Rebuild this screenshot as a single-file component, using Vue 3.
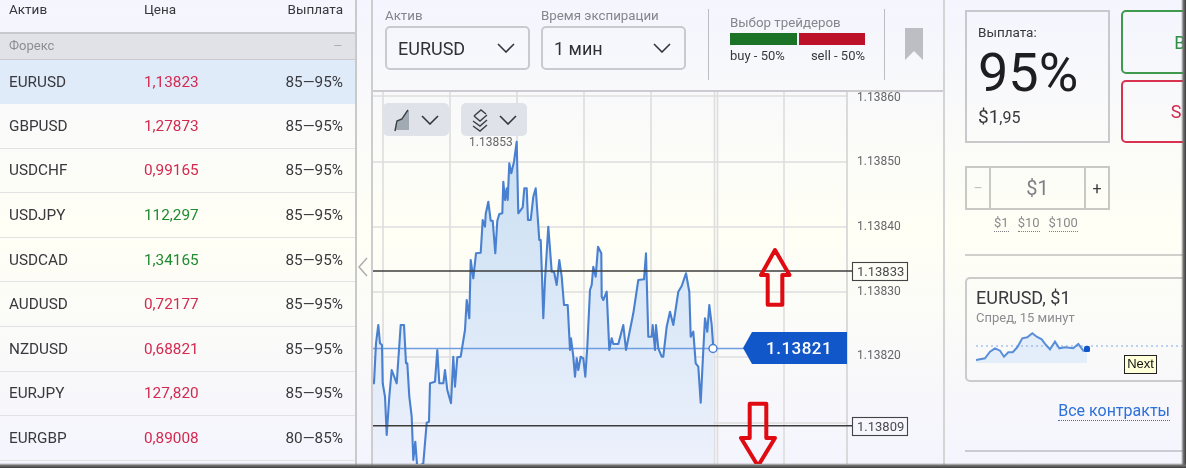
<template>
  <div class="frame">
    <aside class="assets">
      <div class="assets-head">
        <span>Актив</span>
        <span>Цена</span>
        <span class="pay">Выплата</span>
      </div>
      <div class="group">
        <span>Форекс</span>
        <span class="group-dash">—</span>
      </div>
      <div
        v-for="(row, i) in rows"
        :key="row.name"
        class="asset"
        :class="{ active: i === 0 }"
      >
        <span>{{ row.name }}</span>
        <span :class="row.up ? 'up' : 'down'">{{ row.price }}</span>
        <span class="pay">{{ row.pay }}</span>
      </div>
    </aside>

    <div class="collapse">
      <svg width="12" height="20" viewBox="0 0 12 20">
        <path d="M10 1 2 10l8 9" fill="none" stroke="#aeaeae" stroke-width="1.5" />
      </svg>
    </div>

    <main class="work">
      <div class="toolbar">
        <div class="field">
          <label>Актив</label>
          <div class="select">
            <span>EURUSD</span>
            <svg class="chev" width="18" height="10" viewBox="0 0 18 10"><path d="M1 1l8 8 8-8" /></svg>
          </div>
        </div>
        <div class="field">
          <label>Время экспирации</label>
          <div class="select">
            <span>1 мин</span>
            <svg class="chev" width="18" height="10" viewBox="0 0 18 10"><path d="M1 1l8 8 8-8" /></svg>
          </div>
        </div>
        <div class="traders">
          <div class="traders-title">Выбор трейдеров</div>
          <div class="bars"><i class="bar-buy"></i><i class="bar-sell"></i></div>
          <div class="bars-text"><span>buy - 50%</span><span>sell - 50%</span></div>
        </div>
        <div class="mark">
          <svg width="18" height="32" viewBox="0 0 18 32"><path d="M0 0h18v32l-9-9-9 9z" fill="#bdbdc4" /></svg>
        </div>
      </div>

      <div class="chart">
        <svg class="plot" width="570" height="372" viewBox="373 92 570 372">
          <defs>
            <linearGradient id="areaFill" x1="0" y1="0" x2="0" y2="1">
              <stop offset="0" stop-color="#c9dff2" />
              <stop offset="1" stop-color="#edf1fc" />
            </linearGradient>
          </defs>
          <line v-for="x in gridX" :key="'x' + x" :x1="x" :x2="x" y1="92" y2="464" class="grid" />
          <line v-for="y in gridY" :key="'y' + y" x1="371" x2="847" :y1="y" :y2="y" class="grid" />
          <line x1="847" x2="847" y1="92" y2="464" class="axis" />

          <path :d="areaPath" fill="url(#areaFill)" />
          <line x1="371" x2="745" y1="348.5" y2="348.5" stroke="#6f9fe0" stroke-width="1.3" />
          <path :d="linePath" fill="none" stroke="#4a80d0" stroke-width="2.1" stroke-linejoin="round" />
          <circle cx="713" cy="348.5" r="4" fill="#fff" stroke="#4a80d0" stroke-width="1.5" />

          <text v-for="t in ticks" :key="t.label" x="857" :y="t.y" class="tick">{{ t.label }}</text>
          <text x="469" y="146" class="tick">1.13853</text>

          <line x1="371" x2="852" y1="271" y2="271" class="level" />
          <line x1="371" x2="852" y1="425.7" y2="425.7" class="level" />
          <rect x="852.5" y="262.5" width="55" height="18" class="level-box" />
          <rect x="852.5" y="417.5" width="55" height="18" class="level-box" />
          <text x="857" y="276" class="level-text">1.13833</text>
          <text x="857" y="431" class="level-text">1.13809</text>

          <polygon points="743,348 752,332 847,332 847,364 752,364" fill="#1257c9" />
          <text x="766" y="354" class="tag-text">1.13821</text>

          <polygon class="arrow" points="775,250 761,275 767.7,275 767.7,304.7 782.3,304.7 782.3,275 789.5,275" />
          <polygon class="arrow" points="749.7,403.7 766.3,403.7 766.3,438 775,438 758,466 741,438 749.7,438" />
        </svg>

        <div class="tools">
          <div class="tool">
            <svg width="18" height="24" viewBox="0 0 18 24">
              <path d="M3 22l2-9 5-2 6-9v20z" fill="#a1a9b3" />
              <path d="M2 23l2-10 5-2 6-9" fill="none" stroke="#3b3f46" stroke-width="1.5" />
            </svg>
            <svg class="chev" width="18" height="10" viewBox="0 0 18 10"><path d="M1 1l8 8 8-8" /></svg>
          </div>
          <div class="tool">
            <svg width="18" height="24" viewBox="0 0 18 24">
              <g fill="none" stroke="#3b3f46" stroke-width="1.4">
                <path d="M3 8l7-6 5 4" />
                <path d="M3 8l6 5 7-6" />
                <path d="M2 13l7 5 7-6" />
                <path d="M2 18l7 5 7-6" />
              </g>
            </svg>
            <svg class="chev" width="18" height="10" viewBox="0 0 18 10"><path d="M1 1l8 8 8-8" /></svg>
          </div>
        </div>
      </div>
    </main>

    <section class="side">
      <div class="top-row">
        <div class="payout">
          <div class="payout-label">Выплата:</div>
          <div class="payout-value">95%</div>
          <div class="payout-sum">$1<small>,95</small></div>
        </div>
        <div class="actions">
          <button class="btn btn-buy">BUY</button>
          <button class="btn btn-sell">SELL</button>
        </div>
      </div>

      <div class="stepper">
        <div class="step step-off">–</div>
        <div class="amount">$1</div>
        <div class="step">+</div>
      </div>
      <div class="presets">
        <span>$1</span>
        <span>$10</span>
        <span>$100</span>
      </div>

      <hr class="rule rule-a" />

      <div class="contract">
        <div class="contract-title">EURUSD, $1</div>
        <div class="contract-sub">Спред, 15 минут</div>
        <svg class="spark" width="208" height="34" viewBox="976 342 208 34">
          <path :d="sparkArea" fill="#e4eefa" />
          <line x1="976" x2="1184" y1="356" y2="356" stroke="#7fa9e6" stroke-width="1.2" stroke-dasharray="2 3" />
          <path :d="sparkLine" fill="none" stroke="#5a8ed8" stroke-width="2" />
          <rect x="1084" y="356" width="6" height="6" rx="1.5" fill="#1257c9" />
        </svg>
        <div class="hint">Next</div>
      </div>

      <div class="all-row"><a class="all">Все контракты</a></div>

      <hr class="rule rule-b" />
    </section>

    <div class="edge-right"></div>
    <div class="edge-bottom"></div>
  </div>
</template>

<script setup>
const rows = [
  { name: 'EURUSD', price: '1,13823', up: false, pay: '85—95%' },
  { name: 'GBPUSD', price: '1,27873', up: false, pay: '85—95%' },
  { name: 'USDCHF', price: '0,99165', up: false, pay: '85—95%' },
  { name: 'USDJPY', price: '112,297', up: true, pay: '85—95%' },
  { name: 'USDCAD', price: '1,34165', up: true, pay: '85—95%' },
  { name: 'AUDUSD', price: '0,72177', up: false, pay: '85—95%' },
  { name: 'NZDUSD', price: '0,68821', up: false, pay: '85—95%' },
  { name: 'EURJPY', price: '127,820', up: false, pay: '85—95%' },
  { name: 'EURGBP', price: '0,89008', up: false, pay: '80—85%' }
]

const gridX = [383, 450, 517, 584, 651, 714.5, 717.5, 784]
const gridY = [96, 162, 227, 292, 357, 423]

const ticks = [
  { label: '1.13860', y: 101 },
  { label: '1.13850', y: 165 },
  { label: '1.13840', y: 230 },
  { label: '1.13830', y: 295 },
  { label: '1.13820', y: 359 }
]

// traced from the chart, first part is x/y at 3x from (370,130)
const partA = [
  [0,738],[12,760],[18,640],[25,585],[30,640],[36,645],[38,760],[45,800],[50,915],[58,800],[65,720],[80,760],
  [92,585],[102,585],[108,700],[112,700],[118,800],[125,860],[130,990],[136,935],[142,1014],[160,1000],[170,878],
  [177,875],[180,760],[195,755],[202,660],[208,760],[220,760],[225,720],[232,780],[243,820],[250,680],[255,770],
  [262,682],[272,680],[285,600],[290,510],[298,565],[302,390],[310,445],[318,370],[332,368],[338,270],[345,290],
  [347,252],[355,215],[362,272],[368,272],[376,370],[382,272],[388,252],[397,250],[400,155],[405,210],[410,175],
  [413,210],[418,100],[424,130],[432,95],[440,35],[445,250],[458,232],[463,175],[470,175],[474,270],[482,270],
  [490,200],[497,175],[508,330],[512,330],[516,440],[520,565],[525,450],[535,290],[545,425],[552,425],[560,465],
  [568,390],[575,440],[582,525],[593,525],[600,660],[603,625],[610,680],[615,740],[620,685],[625,720],[632,680],
  [640,685],[646,740],[652,650],[660,480],[665,465],[670,410],[677,440],[684,350],[694,370]
].map(([x, y]) => [370 + x / 3, 130 + y / 3])

// second part, 3x from (600,220)
const partB = [
  [5,230],[10,240],[20,215],[28,390],[35,355],[40,372],[55,372],[70,315],[78,390],[100,280],[115,180],[132,178],
  [138,100],[145,350],[155,350],[158,315],[165,390],[168,315],[175,385],[185,410],[190,410],[200,320],[210,275],
  [220,315],[235,215],[245,198],[258,160],[268,215],[272,350],[280,335],[287,430],[295,440],[302,548],[310,390],
  [315,295],[322,335],[328,255],[335,315],[340,385]
].map(([x, y]) => [600 + x / 3, 220 + y / 3])

const toPath = (pts) => pts.map(([x, y], i) => (i ? 'L' : 'M') + x.toFixed(1) + ' ' + y.toFixed(1)).join('')

const line = [...partA, ...partB]
const linePath = toPath(line)
const areaPath = linePath + 'L713 470L370 470Z'

const spark = [
  [108,390],[135,385],[150,365],[165,355],[180,362],[192,380],[205,367],[218,367],[232,352],[247,325],[262,322],
  [277,310],[290,320],[305,328],[318,345],[330,358],[345,335],[358,355],[375,352],[400,355],[415,342],[430,362],[441,362]
].map(([x, y]) => [940 + x / 3, 240 + y / 3])

const sparkLine = toPath(spark)
const sparkArea = sparkLine + 'L1087 373L976 373Z'
</script>

<style scoped>
.frame {
  position: relative;
  display: flex;
  width: 1186px;
  height: 468px;
  overflow: hidden;
  background: linear-gradient(#f4f5fe 0, #fbfbf9 30%, #fffff5 50%, #f4f4fe 100%);
  font-family: Roboto, "Liberation Sans", sans-serif;
  color: #38383d;
  filter: blur(0.4px);
}

/* left list */
.assets {
  flex: none;
  width: 357px;
  border-right: 2px solid #c9c9c9;
  box-sizing: border-box;
  font-size: 15.3px;
}
.assets-head {
  display: grid;
  grid-template-columns: 135px 1fr auto;
  height: 32px;
  padding: 1px 12px 0 9px;
  box-sizing: border-box;
  font-size: 13.5px;
  line-height: 17px;
}
.group {
  display: flex;
  justify-content: space-between;
  align-items: center;
  height: 28px;
  padding: 0 13px 2px 9px;
  box-sizing: border-box;
  background: #e1e1e8;
  border-top: 2px solid #c8c8cf;
  border-bottom: 1px solid #cacad0;
  color: #8d8d93;
  font-size: 13px;
}
.group-dash {
  font-size: 11px;
  color: #a5a5aa;
}
.asset {
  display: grid;
  grid-template-columns: 135px 1fr auto;
  align-items: center;
  height: 44.6px;
  padding: 0 12px 0 9px;
  box-sizing: border-box;
  border-bottom: 1px solid #e2e2e2;
}
.asset.active {
  height: 44px;
  background: #e0ebfa;
  border-bottom: 0;
}
.pay {
  text-align: right;
}
.down {
  color: #d3294e;
}
.up {
  color: #1e8b30;
}

.collapse {
  flex: none;
  width: 14px;
  padding-top: 257px;
  box-sizing: border-box;
}

/* centre */
.work {
  flex: none;
  display: flex;
  flex-direction: column;
  width: 570px;
  border-left: 2px solid #cdcdcd;
  border-right: 2px solid #d4d4d4;
  margin-right: -2px;
}
.toolbar {
  flex: none;
  display: flex;
  height: 92px;
  padding: 8px 0 0 12px;
  box-sizing: border-box;
  border-bottom: 2px solid #cbcbd1;
}
.field {
  width: 145px;
  margin-right: 11px;
}
.field label {
  display: block;
  height: 18px;
  font-size: 13.3px;
  line-height: 15px;
  color: #85858b;
}
.select {
  display: flex;
  justify-content: space-between;
  align-items: center;
  height: 44px;
  padding: 0 13px 0 11px;
  box-sizing: border-box;
  border: 2px solid #c9c9d0;
  border-radius: 5px;
  font-size: 18px;
  color: #303036;
}
.chev {
  fill: none;
  stroke: #33363c;
  stroke-width: 1.6;
}
.traders {
  width: 177px;
  height: 71px;
  margin: 1px 0 0 11px;
  padding: 6px 0 0 21px;
  box-sizing: border-box;
  border-left: 1px solid #bcbcc2;
  border-right: 1px solid #bcbcc2;
}
.traders-title {
  font-size: 13.3px;
  line-height: 16px;
  color: #85858b;
}
.bars {
  display: flex;
  gap: 2px;
  width: 135px;
  margin-top: 2px;
}
.bars i {
  flex: 1;
  height: 12px;
}
.bar-buy {
  background: #1a7326;
}
.bar-sell {
  background: #bd1029;
}
.bars-text {
  display: flex;
  justify-content: space-between;
  width: 135px;
  margin-top: 4px;
  font-size: 13px;
  line-height: 14px;
}
.mark {
  margin: 20px 0 0 20px;
}

.chart {
  position: relative;
  flex: 1;
}
.plot {
  position: absolute;
  left: 0;
  top: 0;
}
.grid {
  stroke: #dedede;
  stroke-width: 1.6;
}
.axis {
  stroke: #d3d3d3;
  stroke-width: 1.6;
}
.level {
  stroke: #3c3c3c;
  stroke-width: 1.4;
}
.level-box {
  fill: none;
  stroke: #444;
  stroke-width: 1.1;
}
.tick {
  font-size: 12px;
  fill: #66666a;
}
.level-text {
  font-size: 13px;
  fill: #4a4a4e;
}
.tag-text {
  font-size: 17px;
  font-weight: 500;
  letter-spacing: 0.5px;
  fill: #fff;
}
.arrow {
  fill: none;
  stroke: #e00b12;
  stroke-width: 4;
  stroke-linejoin: round;
}
.tools {
  position: absolute;
  left: 10px;
  top: 11px;
  display: flex;
  gap: 12px;
}
.tool {
  display: flex;
  align-items: center;
  justify-content: center;
  gap: 10px;
  width: 66px;
  height: 33px;
  background: #dfe2e8;
  border-radius: 5px;
}

/* right */
.side {
  flex: none;
  position: relative;
  width: 243px;
  padding: 10px 0 0 22px;
  box-sizing: border-box;
  overflow: hidden;
}
.top-row {
  display: flex;
  gap: 11px;
}
.payout {
  flex: none;
  width: 145px;
  height: 133px;
  padding: 12px 0 0 11px;
  box-sizing: border-box;
  border: 2px solid #c8c8cd;
}
.payout-label {
  font-size: 13.5px;
  line-height: 16px;
}
.payout-value {
  margin-top: 3px;
  font-size: 54px;
  line-height: 60px;
  font-weight: 400;
  color: #1d1d22;
}
.payout-sum {
  margin-top: 3px;
  font-size: 19px;
  line-height: 22px;
}
.payout-sum small {
  font-size: 16px;
}
.actions {
  flex: none;
  display: flex;
  flex-direction: column;
  gap: 6px;
}
.btn {
  width: 140px;
  height: 64px;
  background: transparent;
  border: 2px solid;
  border-radius: 5px;
  font-family: inherit;
  font-size: 18px;
  padding: 0;
}
.btn-buy {
  border-color: #3f9a4e;
  color: #2f8f42;
}
.btn-sell {
  height: 63px;
  border-color: #d9324f;
  color: #d3294e;
}
.stepper {
  display: flex;
  width: 145px;
  height: 44px;
  margin-top: 23px;
  box-sizing: border-box;
  border: 2px solid #c9c9c4;
}
.step {
  display: flex;
  align-items: center;
  justify-content: center;
  width: 22px;
  font-size: 16px;
  color: #3c3c40;
}
.step-off {
  color: #c2c2c2;
  font-size: 14px;
}
.amount {
  flex: 1;
  text-align: center;
  line-height: 40px;
  font-size: 20px;
  color: #808084;
  border-left: 2px solid #c9c9c4;
  border-right: 2px solid #c9c9c4;
}
.presets {
  display: flex;
  gap: 9px;
  margin: 5px 0 0 29px;
  font-size: 13px;
  line-height: 16px;
  color: #8a8a8e;
}
.presets span {
  border-bottom: 1px dotted #808084;
}
.rule {
  margin: 0;
  border: 0;
  border-top: 2px solid #d0d0cc;
}
.rule-a {
  margin-top: 22px;
}
.contract {
  position: relative;
  width: 240px;
  height: 105px;
  margin-top: 21px;
  padding: 8px 0 0 9px;
  box-sizing: border-box;
  border: 2px solid #cbcbcb;
  border-radius: 5px;
}
.contract-title {
  font-size: 18px;
  line-height: 22px;
}
.contract-sub {
  font-size: 13px;
  line-height: 17px;
  color: #8d8d91;
}
.spark {
  display: block;
  margin-top: 6px;
}
.hint {
  position: absolute;
  left: 157px;
  top: 76px;
  width: 33px;
  height: 19px;
  box-sizing: border-box;
  background: #ffffd9;
  border: 1.5px solid #222;
  font-family: "Liberation Sans", sans-serif;
  font-size: 13px;
  line-height: 16px;
  text-align: center;
  color: #111;
}
.all-row {
  width: 205px;
  margin-top: 19px;
  text-align: right;
}
.all {
  font-size: 16px;
  line-height: 18px;
  color: #2d70d9;
  border-bottom: 1px dotted #2d70d9;
}
.rule-b {
  margin-top: 30px;
  border-top-color: #cbcbd2;
}

/* dark screenshot edge */
.edge-right {
  position: absolute;
  top: 0;
  right: 0;
  bottom: 0;
  width: 5px;
  background: linear-gradient(to right, rgba(90, 90, 90, 0), #6f6f6f 50%, #3c3c3c);
}
.edge-bottom {
  position: absolute;
  left: 0;
  right: 0;
  bottom: 0;
  height: 5px;
  background: linear-gradient(rgba(90, 90, 90, 0), #6f6f6f 50%, #3c3c3c);
}
</style>
